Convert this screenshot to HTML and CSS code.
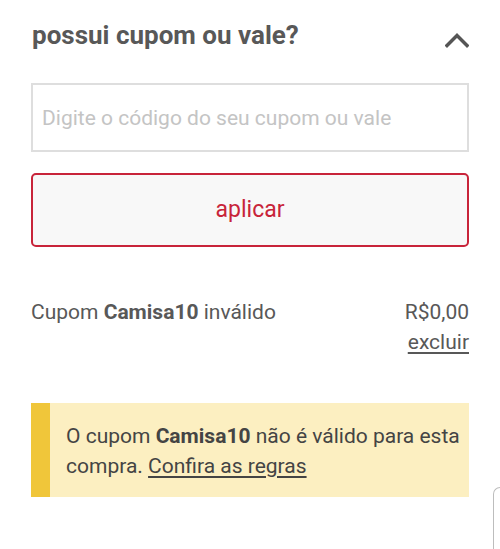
FILE: index.html
```html
<!DOCTYPE html>
<html lang="pt-BR">
<head>
  <meta charset="UTF-8">
  <title>Cupom</title>
  <link rel="stylesheet" href="styles.css">
</head>
<body>

  <section class="coupon">
    <!-- cabeçalho -->
    <div class="coupon-head">
      <h2>possui cupom ou vale?</h2>
      <svg class="chevron" width="24" height="16" viewBox="0 0 24 16">
        <polyline points="2,13.5 12,3.5 22,13.5" fill="none" stroke="#555" stroke-width="3.4" stroke-linecap="square"/>
      </svg>
    </div>

    <form class="coupon-form">
      <input type="text" class="coupon-input" placeholder="Digite o código do seu cupom ou vale">
      <button type="button" class="coupon-btn">aplicar</button>
    </form>

    <div class="coupon-result">
      <span>Cupom <b>Camisa10</b> inválido</span>
      <div class="coupon-price">
        <span>R$0,00</span>
        <a href="#">excluir</a>
      </div>
    </div>

    <div class="coupon-alert">
      <p>O cupom <b>Camisa10</b> não é válido para esta compra. <a href="#">Confira as regras</a></p>
    </div>
  </section>

  <div class="sheet-edge"></div>

</body>
</html>
```

FILE: styles.css
```css
body {
  margin: 0;
  padding: 19px 31px 0;
  font-family: Roboto, "Liberation Sans", sans-serif;
  background-color: #fff;
  color: #555;
  overflow: hidden;
}
.coupon {
  display: flex;
  flex-direction: column;
}
.coupon-head {
  display: flex;
  justify-content: space-between;
  align-items: center;
}
.coupon-head h2 {
  margin: 0;
  font-size: 26px;
  line-height: 32px;
  font-weight: 700;
  color: #585858;
  padding-left: 1px;
}
.chevron {
  margin-top: 10px;
}
.coupon-form {
  display: flex;
  flex-direction: column;
  gap: 21px;
  margin-top: 32px;
}
.coupon-input {
  box-sizing: border-box;
  height: 69px;
  border: 2px solid #dedede;
  padding: 0 9px;
  font-family: inherit;
  font-size: 21px;
  color: #555;
  outline: none;
}
.coupon-input::placeholder {
  color: #c4c4c4;
}
.coupon-btn {
  box-sizing: border-box;
  height: 74px;
  border: 2px solid #c8243a;
  border-radius: 5px;
  background-color: #f8f8f8;
  font-family: inherit;
  font-size: 23px;
  color: #c8243a;
  padding: 0 0 2px;
}
.coupon-result {
  display: flex;
  justify-content: space-between;
  align-items: flex-start;
  margin-top: 50px;
  font-size: 21px;
  line-height: 30px;
  color: #585858;
}
.coupon-result b {
  font-weight: 700;
}
.coupon-price {
  display: flex;
  flex-direction: column;
  align-items: flex-end;
}
.coupon-price a {
  color: #585858;
  text-decoration: underline;
  text-underline-offset: 3px;
}
.coupon-alert {
  margin-top: 46px;
  background-color: #fcefc1;
  border-left: 19px solid #f0c63a;
  padding: 18px 2px 16px 16px;
}
.coupon-alert p {
  margin: 0;
  font-size: 21px;
  line-height: 30px;
  color: #444;
}
.coupon-alert a {
  color: #444;
  text-decoration: underline;
  text-underline-offset: 3px;
}
.sheet-edge {
  position: absolute;
  left: 493px;
  top: 487px;
  width: 7px;
  height: 62px;
  border-left: 1px solid #bdbdbd;
  border-top: 1px solid #bdbdbd;
  border-top-left-radius: 8px;
  box-sizing: border-box;
}
```
